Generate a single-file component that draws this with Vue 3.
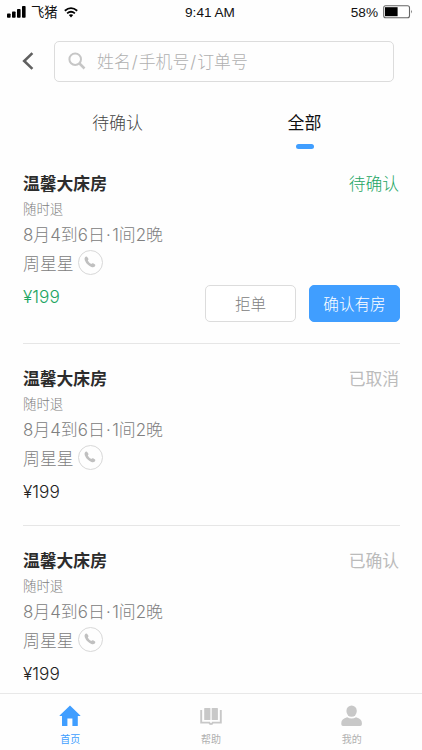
<script setup>
const orders = [
  { id: 1, status: '待确认', state: 'pending' },
  { id: 2, status: '已取消', state: 'closed' },
  { id: 3, status: '已确认', state: 'closed' },
]
</script>

<template>
  <div class="screen">
    <header class="status-bar">
      <div class="carrier">
        <svg class="signal" width="19" height="12" viewBox="0 0 19 12">
          <rect x="0" y="7.5" width="3.6" height="4.2" rx=".8" />
          <rect x="5" y="5.5" width="3.6" height="6.2" rx=".8" />
          <rect x="10" y="3" width="3.6" height="8.7" rx=".8" />
          <rect x="15" y="0" width="3.6" height="11.7" rx=".8" />
        </svg>
        <span class="carrier-name">飞猪</span>
        <svg class="wifi" width="14" height="11" viewBox="0 0 14 11">
          <path d="M.8 3.7Q7-1.5 13.2 3.7M3.1 6.4Q7 3.1 10.9 6.4" fill="none" stroke="#000" stroke-width="1.8" />
          <path d="M4.8 8.1Q7 6.4 9.2 8.1L7 10.4Z" />
        </svg>
      </div>
      <span class="time">9:41 AM</span>
      <div class="power">
        <span>58%</span>
        <svg width="30" height="14" viewBox="0 0 30 14">
          <rect x=".7" y=".7" width="25.8" height="12" rx="2" fill="#fff" stroke="#666" stroke-width="1.1" />
          <rect x="2" y="2.2" width="12.6" height="9" />
          <path d="M28 4.8q1.8 1.9 0 3.8z" fill="#666" />
        </svg>
      </div>
    </header>

    <div class="search-row">
      <svg class="back" width="12" height="18" viewBox="0 0 12 18">
        <path d="M10.4 1.1 2.2 9l8.2 7.9" fill="none" stroke="#606060" stroke-width="2.6" />
      </svg>
      <div class="search-box">
        <svg width="18" height="18" viewBox="0 0 18 18" fill="none" stroke="#c6c6c6">
          <circle cx="7.2" cy="7.2" r="5.8" stroke-width="2" />
          <path d="m11.5 11.5 5 5" stroke-width="2.5" />
        </svg>
        <span>姓名<i>/</i>手机号<i>/</i>订单号</span>
      </div>
    </div>

    <nav class="tabs">
      <div class="tab">待确认</div>
      <div class="tab active">全部</div>
    </nav>

    <main class="orders">
      <article v-for="order in orders" :key="order.id" class="order" :class="order.state">
        <div class="title-row">
          <h2>温馨大床房</h2>
          <span class="status">{{ order.status }}</span>
        </div>
        <div class="policy">随时退</div>
        <div class="stay">8月4到6日<i>·</i>1间2晚</div>
        <div class="guest">
          <span>周星星</span>
          <span class="call">
            <svg width="12" height="12" viewBox="0 0 12 12">
              <path d="M.9 1.5Q1.9.2 3 .8L4.3 2.6Q4.8 3.4 3.8 4.5Q4.8 6.8 7.2 7.9Q8.3 6.9 9.1 7.3L11.1 8.6Q11.8 9.3 10.8 10.4Q9.6 11.6 7.4 10.9Q2.7 9.2.8 4.3Q.2 2.6.9 1.5Z" fill="#c0c0c0" />
            </svg>
          </span>
        </div>
        <div class="bottom-row">
          <span class="price">¥199</span>
          <div v-if="order.state === 'pending'" class="actions">
            <button class="reject">拒单</button>
            <button class="accept">确认有房</button>
          </div>
        </div>
      </article>
    </main>

    <footer class="tabbar">
      <div class="item current">
        <svg width="22" height="22" viewBox="0 0 22 22" fill="currentColor">
          <path d="M11 .5.6 10.6q-.3.5.3.5H3v9.5q0 .5.6.5H8.4v-7.6h5V21.1h4.8q.6 0 .6-.5v-9.5h2.3q.6 0 .2-.5Z" />
        </svg>
        <span>首页</span>
      </div>
      <div class="item">
        <svg width="22" height="22" viewBox="0 0 22 22" fill="currentColor">
          <rect x="4.2" y="3" width="6.2" height="12" rx=".6" />
          <rect x="11.7" y="3" width="6.2" height="12" rx=".6" />
          <path d="M1.2 5v12.6H9.3q.2 1.4 1.7 1.4t1.7-1.4h8.1V5" fill="none" stroke="currentColor" stroke-width="1.9" />
        </svg>
        <span>帮助</span>
      </div>
      <div class="item">
        <svg width="22" height="22" viewBox="0 0 22 22" fill="currentColor">
          <ellipse cx="10.6" cy="6.1" rx="5.2" ry="5.7" />
          <path d="M6.2 12.2Q10.6 15 15 12.2Q20.9 13.7 20.9 18v1.3q0 1.7-1.7 1.7H2q-1.7 0-1.7-1.7V18Q.3 13.7 6.2 12.2Z" />
        </svg>
        <span>我的</span>
      </div>
    </footer>
  </div>
</template>

<style>
body {
  background: #fff;
}
</style>

<style scoped>
.screen {
  box-sizing: border-box;
  width: 422px;
  height: 750px;
  overflow: hidden;
  display: flex;
  flex-direction: column;
  background: #fefefe;
  font-family: Inter, "Noto Sans CJK SC", sans-serif;
  font-weight: 300;
  color: #333;
  white-space: nowrap;
}
svg {
  display: block;
  flex: none;
}
i {
  font-style: normal;
}
.status-bar {
  height: 24px;
  display: grid;
  grid-template-columns: 1fr auto 1fr;
  align-items: center;
  padding: 0 9px 0 7px;
  font-family: "Liberation Sans", "Noto Sans CJK SC", sans-serif;
  font-size: 13.6px;
  font-weight: 400;
  color: #111;
}
.carrier,
.power {
  display: flex;
  align-items: center;
}
.carrier-name {
  margin: 0 6px 0 5px;
  padding-top: 2px;
  font-size: 13.3px;
  line-height: 20px;
}
.power {
  justify-content: flex-end;
  gap: 5px;
}
.search-row {
  height: 74px;
  display: flex;
  align-items: center;
  padding: 0 28px 0 22px;
}
.back {
  margin-right: 20px;
}
.search-box {
  box-sizing: border-box;
  flex: 1;
  height: 41px;
  border: 1px solid #dcdcdc;
  border-radius: 5px;
  display: flex;
  align-items: center;
  gap: 11px;
  padding-left: 13px;
  font-size: 16.9px;
  color: #b0b0b0;
}
.search-box span {
  padding-bottom: 2px;
}
.search-box i {
  margin: 0 1px;
}
.tabs {
  height: 60px;
  display: grid;
  grid-template-columns: 187px 187px;
  justify-content: center;
  font-size: 16.9px;
  line-height: 50px;
  text-align: center;
  color: #444;
}
.tab.active {
  font-weight: 400;
  color: #111;
}
.tab.active::after {
  content: "";
  display: block;
  width: 18px;
  height: 5px;
  margin: -4px auto 0;
  border-radius: 3px;
  background: #409eff;
}
.orders {
  flex: 1;
  min-height: 0;
  overflow: hidden;
  padding: 0 22px 0 23px;
}
.order {
  box-sizing: border-box;
  height: 182px;
  padding-top: 21px;
  border-bottom: 1px solid #e6e6e6;
  font-size: 16.9px;
  color: #808080;
}
.order.pending {
  height: 186px;
  padding-top: 12px;
}
.order:last-child {
  border-bottom: 0;
}
.title-row {
  height: 25px;
  display: flex;
  justify-content: space-between;
  align-items: center;
}
h2 {
  margin: 0;
  font-size: 16.8px;
  font-weight: 600;
  color: #2c2c2c;
}
.status {
  margin-right: 1px;
  color: #bbb;
  font-size: 16.8px;
  font-weight: 400;
}
.pending .status {
  font-weight: 300;
}
.pending .status,
.pending .price {
  color: #1ca562;
}
.policy {
  height: 26px;
  line-height: 28px;
  font-size: 13.4px;
}
.stay {
  height: 25px;
  line-height: 29px;
}
.stay i {
  margin: 0 1.3px;
}
.guest {
  height: 32px;
  display: flex;
  align-items: center;
  gap: 4px;
}
.call {
  box-sizing: border-box;
  width: 25px;
  height: 25px;
  border: 1px solid #d8d8d8;
  border-radius: 50%;
  display: flex;
  align-items: center;
  justify-content: center;
}
.bottom-row {
  height: 37px;
  display: flex;
  justify-content: space-between;
}
.price {
  line-height: 38px;
  font-size: 17.2px;
  color: #222;
}
.actions {
  display: flex;
  gap: 13px;
  margin-top: 7px;
}
button {
  box-sizing: border-box;
  width: 91px;
  height: 37px;
  padding: 0 0 2px;
  border: 1px solid #dcdcdc;
  border-radius: 5px;
  background: #fff;
  color: #808080;
  font: inherit;
  font-size: 15.6px;
}
.accept {
  border-color: #409eff;
  background: #409eff;
  color: #fff;
}
.tabbar {
  box-sizing: border-box;
  flex: none;
  height: 57px;
  border-top: 1px solid #e8e8e8;
  display: grid;
  grid-template-columns: repeat(3, 1fr);
  background: #fefefe;
}
.item {
  display: flex;
  flex-direction: column;
  align-items: center;
  padding-top: 11px;
  gap: 5px;
  font-size: 10px;
  line-height: 14px;
  font-weight: 400;
  color: #c8c8c8;
}
.item span {
  color: #b0b0b0;
}
.item.current,
.item.current span {
  color: #409eff;
}
</style>
